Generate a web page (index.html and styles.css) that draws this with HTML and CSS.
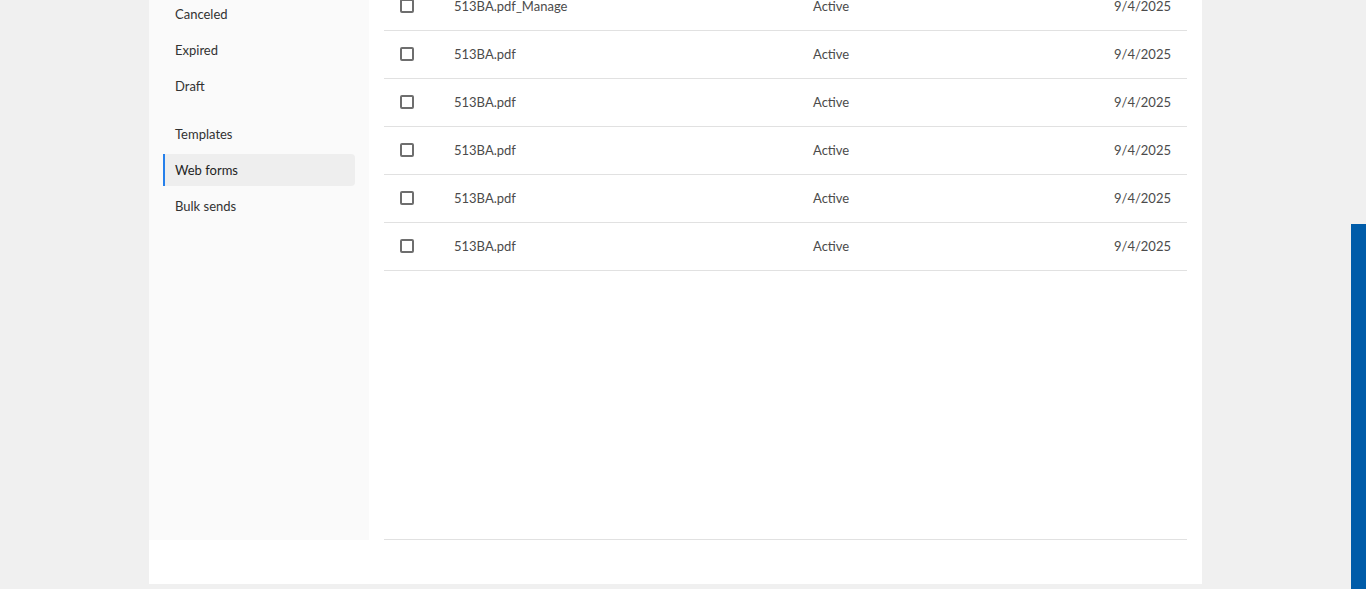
FILE: index.html
```html
<!DOCTYPE html>
<html lang="en">
<head>
<meta charset="utf-8">
<title>Web forms</title>
<link rel="stylesheet" href="styles.css">
</head>
<body>
<div class="panel">
  <div class="panel-body">
    <nav class="sidebar">
      <ul class="nav-group">
        <li class="nav-item">Canceled</li>
        <li class="nav-item">Expired</li>
        <li class="nav-item">Draft</li>
      </ul>
      <ul class="nav-group">
        <li class="nav-item">Templates</li>
        <li class="nav-item selected">Web forms</li>
        <li class="nav-item">Bulk sends</li>
      </ul>
    </nav>
    <section class="main">
      <div class="row"><span class="check"></span><span class="name">513BA.pdf_Manage</span><span class="status">Active</span><span class="date">9/4/2025</span></div>
      <div class="row"><span class="check"></span><span class="name">513BA.pdf</span><span class="status">Active</span><span class="date">9/4/2025</span></div>
      <div class="row"><span class="check"></span><span class="name">513BA.pdf</span><span class="status">Active</span><span class="date">9/4/2025</span></div>
      <div class="row"><span class="check"></span><span class="name">513BA.pdf</span><span class="status">Active</span><span class="date">9/4/2025</span></div>
      <div class="row"><span class="check"></span><span class="name">513BA.pdf</span><span class="status">Active</span><span class="date">9/4/2025</span></div>
      <div class="row"><span class="check"></span><span class="name">513BA.pdf</span><span class="status">Active</span><span class="date">9/4/2025</span></div>
    </section>
  </div>
</div>
<div class="feedback-tab"></div>
</body>
</html>
```
FILE: styles.css
```css
html, body {
  margin: 0;
  padding: 0;
  background: #f0f0f0;
  font-family: Lato, "Open Sans", "Liberation Sans", sans-serif;
  font-size: 13px;
  height: 589px;
  overflow: hidden;
}

.panel {
  margin-left: 149px;
  margin-top: -17px;
  width: 1053px;
  background: #ffffff;
  padding-bottom: 44px;
}

.panel-body {
  display: flex;
  height: 557px;
}

.sidebar {
  width: 220px;
  box-sizing: border-box;
  background: #fafafa;
  padding: 15px 14px 0 14px;
}

.nav-group {
  list-style: none;
  margin: 0 0 16px 0;
  padding: 0;
  display: flex;
  flex-direction: column;
  gap: 4px;
}

.nav-item {
  height: 32px;
  display: flex;
  align-items: center;
  padding-left: 12px;
  padding-bottom: 1px;
  color: #323232;
  border-radius: 0 4px 4px 0;
  box-sizing: border-box;
}

.nav-item.selected {
  background: #eeeeee;
  border-left: 2px solid #2680eb;
  padding-left: 10px;
  color: #1f1f1f;
}

.main {
  flex: 1;
  margin: 0 15px;
  border-bottom: 1px solid #e1e1e1;
}

.row {
  display: flex;
  align-items: center;
  height: 48px;
  box-sizing: border-box;
  border-bottom: 1px solid #e1e1e1;
  color: #4b4b4b;
  padding: 0 16px;
}

.check {
  width: 14px;
  height: 14px;
  box-sizing: border-box;
  border: 2px solid #6e6e6e;
  border-radius: 2px;
  flex: none;
  margin-right: 40px;
  margin-top: -1px;
}

.name {
  width: 359px;
  margin-top: -2px;
}

.status {
  flex: 1;
  margin-top: -2px;
}

.date {
  text-align: right;
  margin-top: -2px;
}

.feedback-tab {
  position: fixed;
  right: 0;
  top: 224px;
  width: 15px;
  height: 365px;
  background: #005ca9;
}
```
